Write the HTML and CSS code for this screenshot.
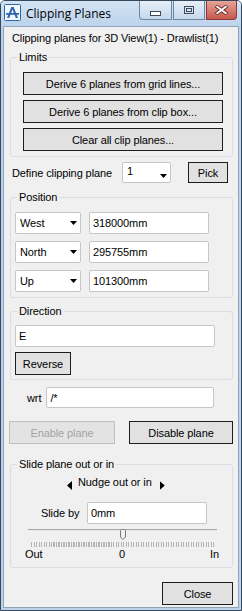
FILE: index.html
```html
<!DOCTYPE html>
<html>
<head>
    <meta charset="UTF-8">
    <title>Clipping Planes</title>
    <link rel="stylesheet" href="styles.css">
</head>
<body>
<div class="window">
    <div class="titlebar">
        <svg class="app-icon" width="17" height="17" viewBox="0 0 17 17">
            <rect x="0.5" y="0.5" width="16" height="16" rx="1" fill="#f4f8fc" stroke="#2f67ad"/>
            <path d="M3 14 L7.3 3 H9.7 L14 14 H11.8 L8.5 5.6 L5.2 14 Z" fill="#2f67ad"/>
            <rect x="2" y="9" width="13" height="1.8" fill="#2f67ad"/>
        </svg>
        <span class="title">Clipping Planes</span>
        <div class="caption-buttons">
            <div class="cap cap-min">
                <svg width="11" height="5" viewBox="0 0 11 5"><rect x="0.5" y="0.5" width="10" height="4" fill="#fff" stroke="#3b4a5c"/></svg>
            </div>
            <div class="cap cap-max">
                <svg width="10" height="8" viewBox="0 0 10 8"><rect x="0.5" y="0.5" width="9" height="7" fill="none" stroke="#3b4a5c"/><rect x="2.5" y="2.5" width="5" height="3" fill="none" stroke="#3b4a5c"/></svg>
            </div>
            <div class="cap cap-close">
                <svg width="13" height="10" viewBox="0 0 13 10"><path d="M1 1 L12 9 M12 1 L1 9" stroke="#5a2020" stroke-width="3.6"/><path d="M1.5 1.3 L11.5 8.7 M11.5 1.3 L1.5 8.7" stroke="#fff" stroke-width="2"/></svg>
            </div>
        </div>
    </div>

    <div class="client">
        <div class="heading">Clipping planes for 3D View(1) - Drawlist(1)</div>

        <fieldset class="group">
            <legend>Limits</legend>
            <div class="limits-body">
                <button class="btn wide">Derive 6 planes from grid lines...</button>
                <button class="btn wide">Derive 6 planes from clip box...</button>
                <button class="btn wide">Clear all clip planes...</button>
            </div>
        </fieldset>

        <div class="define-row">
            <span class="define-label">Define clipping plane</span>
            <div class="combo combo-num"><span>1</span><i class="arrow"></i></div>
            <button class="btn pick">Pick</button>
        </div>

        <fieldset class="group group-position">
            <legend>Position</legend>
            <div class="position-body">
                <div class="pos-row">
                    <div class="combo combo-dir"><span>West</span><i class="arrow"></i></div>
                    <input class="field pos-field" type="text" value="318000mm">
                </div>
                <div class="pos-row">
                    <div class="combo combo-dir"><span>North</span><i class="arrow"></i></div>
                    <input class="field pos-field" type="text" value="295755mm">
                </div>
                <div class="pos-row">
                    <div class="combo combo-dir"><span>Up</span><i class="arrow"></i></div>
                    <input class="field pos-field" type="text" value="101300mm">
                </div>
            </div>
        </fieldset>

        <fieldset class="group group-direction">
            <legend>Direction</legend>
            <div class="direction-body">
                <input class="field dir-field" type="text" value="E">
                <button class="btn reverse">Reverse</button>
            </div>
        </fieldset>

        <div class="wrt-row">
            <span>wrt</span>
            <input class="field wrt-field" type="text" value="/*">
        </div>

        <div class="plane-row">
            <button class="btn enable" disabled>Enable plane</button>
            <button class="btn disable">Disable plane</button>
        </div>

        <fieldset class="group group-slide">
            <legend>Slide plane out or in</legend>
            <div class="nudge">
                <i class="nudge-left"></i>
                <span>Nudge out or in</span>
                <i class="nudge-right"></i>
            </div>
            <div class="slide-row">
                <span class="slide-label">Slide by</span>
                <input class="field slide-field" type="text" value="0mm">
            </div>
            <div class="slider">
                <div class="track"></div>
                <svg class="thumb" width="6" height="11" viewBox="0 0 6 11">
                    <path d="M0.5 1.5 Q0.5 0.5 1.5 0.5 H4.5 Q5.5 0.5 5.5 1.5 V8 L3 10.5 L0.5 8 Z" fill="#f0f0f0" stroke="#7a7a7a"/>
                </svg>
            </div>
            <div class="ticks"></div>
            <div class="tick-labels">
                <span class="tick-out">Out</span>
                <span>0</span>
                <span class="tick-in">In</span>
            </div>
        </fieldset>

        <button class="btn close">Close</button>
    </div>
</div>
</body>
</html>
```

FILE: styles.css
```css
body {
    margin: 0;
    font-family: "Liberation Sans", Arial, sans-serif;
    font-size: 11px;
    letter-spacing: -0.1px;
    color: #000;
}

.window {
    width: 242px;
    height: 611px;
    box-sizing: border-box;
    border: 1px solid #34495e;
    border-radius: 5px 5px 0 0;
    background: #bcd3eb;
    display: flex;
    flex-direction: column;
}

.titlebar {
    height: 25px;
    display: flex;
    align-items: flex-start;
    padding-left: 3px;
    background: linear-gradient(#d3e3f4, #bcd3eb);
    border-radius: 4px 4px 0 0;
}

.app-icon {
    margin-top: 3px;
}

.title {
    font-family: "Open Sans", sans-serif;
    font-size: 12px;
    letter-spacing: 0;
    line-height: 16px;
    margin: 5px 0 0 5px;
}

.caption-buttons {
    margin-left: auto;
    margin-right: 4px;
    display: flex;
    gap: 1px;
}

.cap {
    height: 19px;
    box-sizing: border-box;
    border: 1px solid #6e87a3;
    border-top: none;
    background: linear-gradient(#e6eef8, #c6d8ec);
    display: flex;
    align-items: center;
    justify-content: center;
}

.cap-min {
    width: 33px;
    border-radius: 0 0 0 4px;
    padding-top: 6px;
}

.cap-max {
    width: 32px;
}

.cap-close {
    width: 31px;
    border-radius: 0 0 4px 0;
    border-color: #8a3a3a;
    background: linear-gradient(#e6a597, #c7584a);
}

.client {
    flex: 1;
    margin: 0 2px 2px;
    border: 1px solid #8ea4bb;
    background: #f0f0f0;
    padding: 5px 5px 0 6px;
    display: flex;
    flex-direction: column;
}

.heading {
    line-height: 13px;
    padding-left: 2px;
}

.group {
    margin: 0;
    padding: 0;
    min-width: 0;
    border: 1px solid #d5dfe5;
    border-radius: 3px;
}

.group legend {
    padding: 0 2px;
    margin-left: 6px;
    line-height: 13px;
}

.group:first-of-type {
    margin-top: 6px;
}

.btn {
    font-family: inherit;
    font-size: 11px;
    letter-spacing: -0.1px;
    color: #000;
    background: #e1e1e1;
    border: 1px solid #1e1e1e;
    height: 23px;
    padding: 0;
    box-sizing: border-box;
}

.btn:disabled {
    color: #a3a3a3;
    border-color: #bfbfbf;
    background: #e3e3e3;
}

.wide {
    width: 200px;
}

.limits-body {
    display: flex;
    flex-direction: column;
    gap: 5px;
    padding: 8px 0 5px 12px;
}

.define-row {
    display: flex;
    align-items: center;
    margin-top: 5px;
    height: 21px;
}

.define-label {
    width: 110px;
    padding-left: 2px;
}

.combo {
    box-sizing: border-box;
    background: #fff;
    border: 1px solid #c6c6c6;
    border-radius: 2px;
    display: flex;
    align-items: center;
    justify-content: space-between;
    padding: 0 3px 0 4px;
}

.combo .arrow {
    width: 7px;
    height: 4px;
    background: #000;
    clip-path: polygon(0 0, 100% 0, 50% 100%);
}

.combo-num {
    width: 49px;
    height: 21px;
    align-items: flex-start;
    padding-top: 2px;
}

.combo-num .arrow {
    margin-top: 9px;
}

.pick {
    width: 40px;
    height: 21px;
    margin-left: 17px;
}

.group-position {
    margin-top: 8px;
}

.position-body {
    display: flex;
    flex-direction: column;
    gap: 7px;
    padding: 8px 0 5px 4px;
}

.pos-row {
    display: flex;
    gap: 8px;
}

.combo-dir {
    width: 66px;
    height: 22px;
}

.field {
    box-sizing: border-box;
    height: 22px;
    border: 1px solid #c6c6c6;
    border-radius: 2px;
    background: #fff;
    padding: 0 3px;
    margin: 0;
    font-family: inherit;
    font-size: 11px;
    letter-spacing: -0.1px;
    color: #000;
}

.pos-field {
    width: 120px;
}

.group-direction {
    margin-top: 7px;
}

.direction-body {
    display: flex;
    flex-direction: column;
    align-items: flex-start;
    gap: 5px;
    padding: 7px 0 4px 4px;
}

.dir-field {
    width: 200px;
}

.reverse {
    width: 56px;
}

.wrt-row {
    display: flex;
    align-items: center;
    gap: 5px;
    margin-top: 7px;
    padding-left: 17px;
}

.wrt-field {
    width: 168px;
    height: 21px;
}

.plane-row {
    display: flex;
    justify-content: space-between;
    margin: 13px 0 0 -1px;
}

.enable {
    width: 106px;
}

.disable {
    width: 104px;
}

.group-slide {
    margin-top: 14px;
}

.nudge {
    display: flex;
    align-items: flex-start;
    padding: 5px 0 0 56px;
    line-height: 13px;
}

.nudge-left,
.nudge-right {
    width: 5px;
    height: 9px;
    margin-top: 5px;
    background: #000;
}

.nudge-left {
    margin-right: 6px;
    clip-path: polygon(100% 0, 0 50%, 100% 100%);
}

.nudge-right {
    margin-left: 8px;
    clip-path: polygon(0 0, 100% 50%, 0 100%);
}

.slide-row {
    display: flex;
    align-items: center;
    margin-top: 12px;
    padding-left: 30px;
}

.slide-label {
    width: 46px;
}

.slide-field {
    width: 120px;
}

.slider {
    position: relative;
    height: 11px;
    margin: 4px 15px 0 17px;
}

.track {
    margin-top: 5px;
    height: 2px;
    background: linear-gradient(#a9a9a9 50%, #e8e8e8 50%);
}

.thumb {
    position: absolute;
    left: 92px;
    top: 0;
}

.ticks {
    height: 5px;
    margin: 2px 16px 0 20px;
    background: repeating-linear-gradient(90deg, #b4b4b4 0, #b4b4b4 1px, transparent 1px, transparent 2.5px);
}

.tick-labels {
    display: grid;
    grid-template-columns: 1fr auto 1fr;
    line-height: 13px;
    margin-top: 1px;
    padding: 0 13px 6px 14px;
}

.tick-in {
    justify-self: end;
}

.close {
    align-self: flex-end;
    width: 71px;
    margin-top: 14px;
}
```
